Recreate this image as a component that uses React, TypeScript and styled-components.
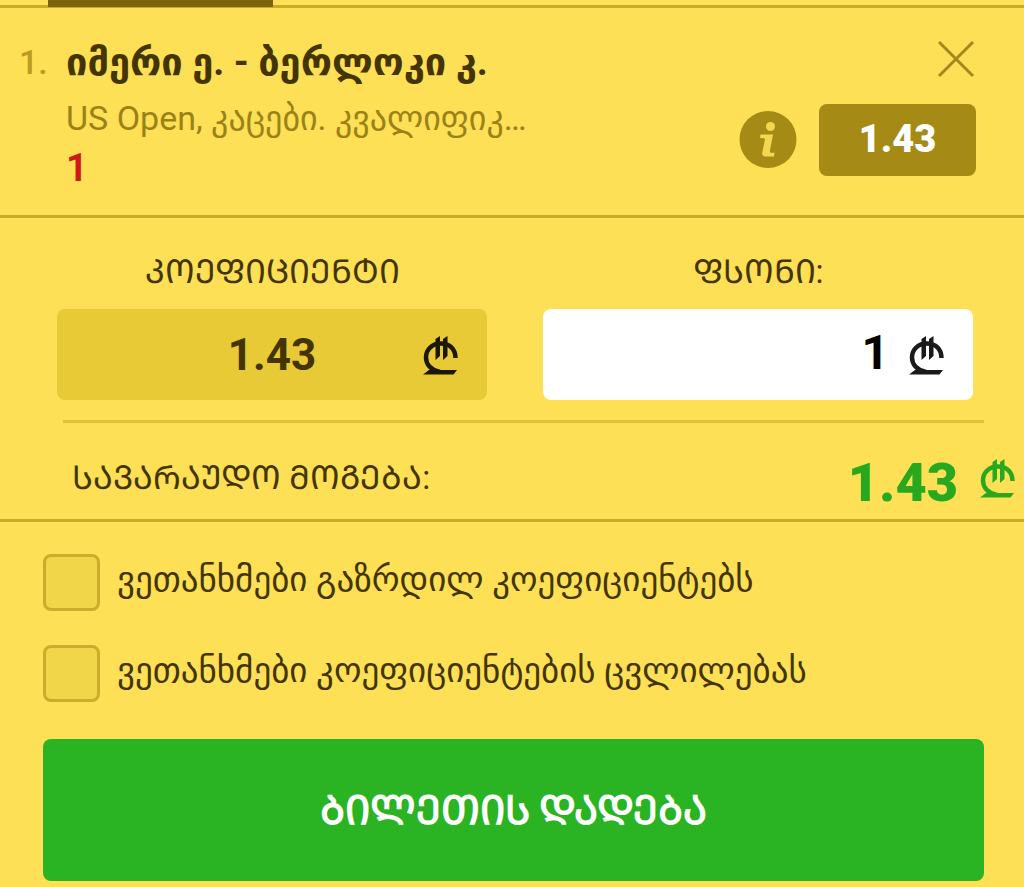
import React, { useState } from "react";
import styled, { createGlobalStyle } from "styled-components";

const c = {
  page: "#fde055",
  line: "#c9ab28",
  softLine: "#dec43a",
  olive: "#a58a15",
  muted: "#9b8216",
  dark: "#443500",
  green: "#2ab322",
};

const GlobalStyle = createGlobalStyle`
  *, *::before, *::after { box-sizing: border-box; }
  body {
    margin: 0;
    background: ${c.page};
    color: ${c.dark};
    font-family: Roboto, "DejaVu Sans", sans-serif;
  }
`;

const Slip = styled.main`
  display: flex;
  flex-direction: column;
`;

const TabStrip = styled.div`
  height: 8px;
  padding-left: 48px;
  box-shadow: inset 0 -3px ${c.line};
`;

const ActiveTab = styled.div`
  width: 225px;
  height: 7px;
  background: #7b650c;
`;

const Selection = styled.section`
  display: flex;
  height: 210px;
  padding: 28px 48px 0 19px;
  border-bottom: 3px solid ${c.line};
`;

const Index = styled.span`
  width: 47px;
  font-size: 34px;
  font-weight: 500;
  line-height: 52px;
  color: #b99c22;
`;

const Info = styled.div`
  flex: 1;
  min-width: 0;
`;

const Match = styled.h2`
  margin: 0;
  font-size: 38px;
  font-weight: 700;
  line-height: 52px;
  white-space: nowrap;
`;

const Tournament = styled.p`
  margin: 4px 0 0;
  font-size: 34px;
  line-height: 52px;
  color: ${c.muted};
  white-space: nowrap;
`;

const Pick = styled.strong`
  display: block;
  font-size: 38px;
  line-height: 48px;
  color: #d01818;
`;

const Side = styled.div`
  display: flex;
  flex-direction: column;
  align-items: flex-end;
  padding-top: 4px;
`;

const IconButton = styled.button`
  display: flex;
  padding: 0;
  border: 0;
  background: none;
  cursor: pointer;
`;

const OddsRow = styled.div`
  display: flex;
  align-items: center;
  gap: 22px;
  margin-top: 26px;
`;

const OddsButton = styled.button`
  width: 157px;
  height: 72px;
  padding: 0 0 2px;
  border: 0;
  border-radius: 8px;
  background: ${c.olive};
  color: #fff;
  font: 900 38px Roboto, sans-serif;
`;

const Fields = styled.section`
  display: grid;
  grid-template-columns: repeat(2, minmax(0, 1fr));
  gap: 56px;
  padding: 28px 51px 20px 57px;
`;

const Field = styled.div`
  display: flex;
  flex-direction: column;
`;

const FieldLabel = styled.label`
  height: 63px;
  font-size: 33px;
  line-height: 52px;
  text-align: center;
`;

const InputBox = styled.div<{ $filled?: boolean }>`
  display: flex;
  align-items: center;
  gap: 20px;
  height: 91px;
  padding: 0 28px;
  border-radius: 8px;
  background: ${(p) => (p.$filled ? "#e7ca36" : "#fff")};
`;

const ValueInput = styled.input<{ $centered?: boolean }>`
  flex: 1;
  min-width: 0;
  padding: ${(p) => (p.$centered ? "0 0 0 56px" : "0 0 4px")};
  border: 0;
  outline: 0;
  background: none;
  color: ${(p) => (p.$centered ? c.dark : "#000")};
  font: 700 ${(p) => (p.$centered ? 44 : 48)}px Roboto, sans-serif;
  text-align: ${(p) => (p.$centered ? "center" : "right")};
`;

const Payout = styled.section`
  display: flex;
  align-items: center;
  height: 99px;
  padding: 14px 8px 0 72px;
  border-bottom: 3px solid ${c.line};
`;

const Divider = styled.hr`
  width: auto;
  height: 3px;
  margin: 0 40px 0 63px;
  border: 0;
  background: ${c.softLine};
`;

const PayoutLabel = styled.span`
  flex: 1;
  font-size: 33px;
  line-height: 52px;
`;

const PayoutValue = styled.output`
  margin-right: 22px;
  padding-top: 8px;
  font: 900 54px Roboto, sans-serif;
  color: #27a81f;
`;

const Options = styled.section`
  display: flex;
  flex-direction: column;
  gap: 34px;
  padding: 32px 40px 0 43px;
`;

const Option = styled.label`
  display: flex;
  align-items: center;
  gap: 17px;
`;

const OptionText = styled.span`
  padding-bottom: 5px;
  font-size: 35px;
  line-height: 52px;
  white-space: nowrap;
`;

const CheckBox = styled.input`
  flex: none;
  appearance: none;
  width: 57px;
  height: 57px;
  margin: 0;
  border: 3px solid #cbad2b;
  border-radius: 8px;
  background: #f2d649;

  &:checked {
    background: ${c.olive};
  }
`;

const SubmitRow = styled.div`
  padding: 37px 40px 6px 43px;
`;

const SubmitButton = styled.button`
  display: block;
  width: 100%;
  height: 142px;
  padding: 0 0 4px;
  border: 0;
  border-radius: 8px;
  background: ${c.green};
  color: #fff;
  font: 900 40px Roboto, "DejaVu Sans", sans-serif;
`;

const Lari = ({ color }: { color: string }) => (
  <svg width="36" height="40" viewBox="0 0 36 40" role="img" aria-label="GEL">
    <path
      d="M17 37C8 35 3 29.500 3 22.500C3 14 9.500 8.500 18 8.500C26.500 8.500 32.500 14 32.500 23"
      fill="none"
      stroke={color}
      strokeWidth="4.500"
    />
    <path
      d="M12.500 4L17 1V21L12.500 25ZM20 4L24.500 1V21L20 25ZM0 39.500L6 35H34L30.500 39.500Z"
      fill={color}
    />
  </svg>
);

const CloseIcon = () => (
  <svg width="38" height="38" viewBox="0 0 38 38">
    <path d="M1 2L35 36M35 2L1 36" stroke="#a2881e" strokeWidth="3" />
  </svg>
);

const InfoIcon = () => (
  <svg width="58" height="58" viewBox="0 0 58 58">
    <circle cx="29" cy="28.500" r="28.500" fill={c.olive} />
    <circle cx="31.500" cy="15.500" r="4.500" fill="#f3d750" />
    <path
      d="M21.500 23.500H34L31 39C30.500 42 32 42 35.500 41.500L35 45.500H27C24 45.500 22.500 44 23.500 40.500L26 28Q25.500 27 21 27Z"
      fill="#f3d750"
    />
  </svg>
);

const caps = (text: string) => text.toUpperCase();

export default function App() {
  const [stake, setStake] = useState("1");
  return (
    <>
      <GlobalStyle />
      <Slip>
        <TabStrip>
          <ActiveTab />
        </TabStrip>
        <Selection>
          <Index>1.</Index>
          <Info>
            <Match>იმერი ე. - ბერლოკი კ.</Match>
            <Tournament>US Open, კაცები. კვალიფიკ…</Tournament>
            <Pick>1</Pick>
          </Info>
          <Side>
            <IconButton type="button" aria-label="Remove">
              <CloseIcon />
            </IconButton>
            <OddsRow>
              <IconButton type="button" aria-label="Info">
                <InfoIcon />
              </IconButton>
              <OddsButton type="button">1.43</OddsButton>
            </OddsRow>
          </Side>
        </Selection>
        <Fields>
          <Field>
            <FieldLabel htmlFor="odds">{caps("კოეფიციენტი")}</FieldLabel>
            <InputBox $filled>
              <ValueInput id="odds" $centered readOnly value="1.43" />
              <Lari color="#1d1804" />
            </InputBox>
          </Field>
          <Field>
            <FieldLabel htmlFor="stake">{caps("ფსონი:")}</FieldLabel>
            <InputBox>
              <ValueInput
                id="stake"
                inputMode="decimal"
                value={stake}
                onChange={(e) => setStake(e.target.value)}
              />
              <Lari color="#1a1a1a" />
            </InputBox>
          </Field>
        </Fields>
        <Divider />
        <Payout>
          <PayoutLabel>{caps("სავარაუდო მოგება:")}</PayoutLabel>
          <PayoutValue>1.43</PayoutValue>
          <Lari color="#27a81f" />
        </Payout>
        <Options>
          <Option>
            <CheckBox type="checkbox" />
            <OptionText>ვეთანხმები გაზრდილ კოეფიციენტებს</OptionText>
          </Option>
          <Option>
            <CheckBox type="checkbox" />
            <OptionText>ვეთანხმები კოეფიციენტების ცვლილებას</OptionText>
          </Option>
        </Options>
        <SubmitRow>
          <SubmitButton type="button">{caps("ბილეთის დადება")}</SubmitButton>
        </SubmitRow>
      </Slip>
    </>
  );
}
